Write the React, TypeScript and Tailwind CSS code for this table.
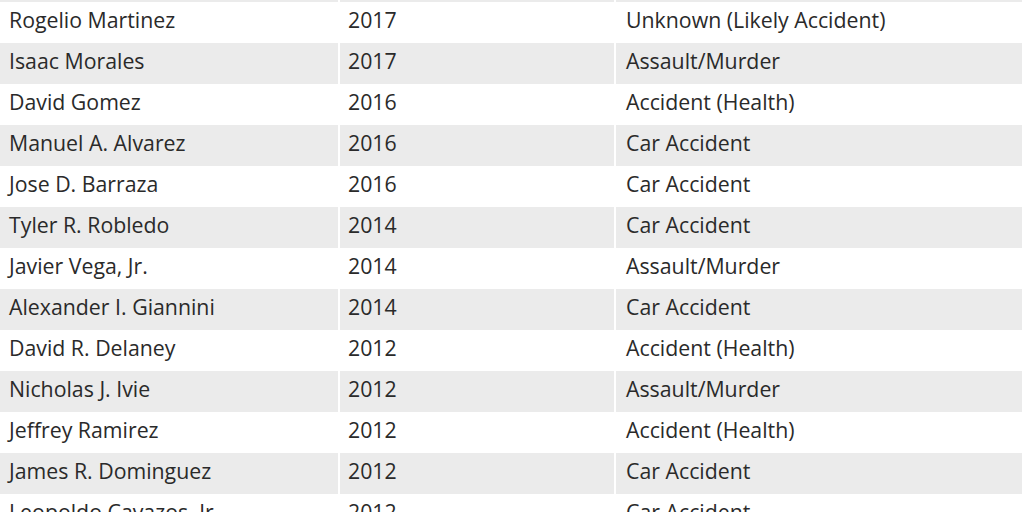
import React from 'react';

type Row = { name: string; year: string; cause: string };

const rows: Row[] = [
  { name: 'Rogelio Martinez', year: '2017', cause: 'Unknown (Likely Accident)' },
  { name: 'Isaac Morales', year: '2017', cause: 'Assault/Murder' },
  { name: 'David Gomez', year: '2016', cause: 'Accident (Health)' },
  { name: 'Manuel A. Alvarez', year: '2016', cause: 'Car Accident' },
  { name: 'Jose D. Barraza', year: '2016', cause: 'Car Accident' },
  { name: 'Tyler R. Robledo', year: '2014', cause: 'Car Accident' },
  { name: 'Javier Vega, Jr.', year: '2014', cause: 'Assault/Murder' },
  { name: 'Alexander I. Giannini', year: '2014', cause: 'Car Accident' },
  { name: 'David R. Delaney', year: '2012', cause: 'Accident (Health)' },
  { name: 'Nicholas J. Ivie', year: '2012', cause: 'Assault/Murder' },
  { name: 'Jeffrey Ramirez', year: '2012', cause: 'Accident (Health)' },
  { name: 'James R. Dominguez', year: '2012', cause: 'Car Accident' },
  { name: 'Leopoldo Cavazos, Jr.', year: '2012', cause: 'Car Accident' },
];

function TableRow({ row, shaded }: { row: Row; shaded: boolean }) {
  const cell = shaded ? 'bg-[#ebebeb]' : 'bg-white';
  return (
    <div className="flex h-[41px] gap-[2px]">
      <div className={`${cell} flex w-[338px] items-center pb-[5px] pl-[9px]`}>{row.name}</div>
      <div className={`${cell} flex w-[274px] items-center pb-[5px] pl-[8px]`}>{row.year}</div>
      <div className={`${cell} flex w-[406px] items-center pb-[5px] pl-[10px]`}>{row.cause}</div>
    </div>
  );
}

export default function App() {
  return (
    <div
      className="h-[512px] w-[1024px] overflow-hidden bg-white text-[21.3px] leading-none text-[#2a2a2a]"
      style={{ fontFamily: '"Open Sans", sans-serif' }}
    >
      <div className="-mt-[39px]">
        <TableRow row={{ name: '', year: '', cause: '' }} shaded />
        {rows.map((r, i) => (
          <TableRow key={r.name} row={r} shaded={i % 2 === 1} />
        ))}
      </div>
    </div>
  );
}
